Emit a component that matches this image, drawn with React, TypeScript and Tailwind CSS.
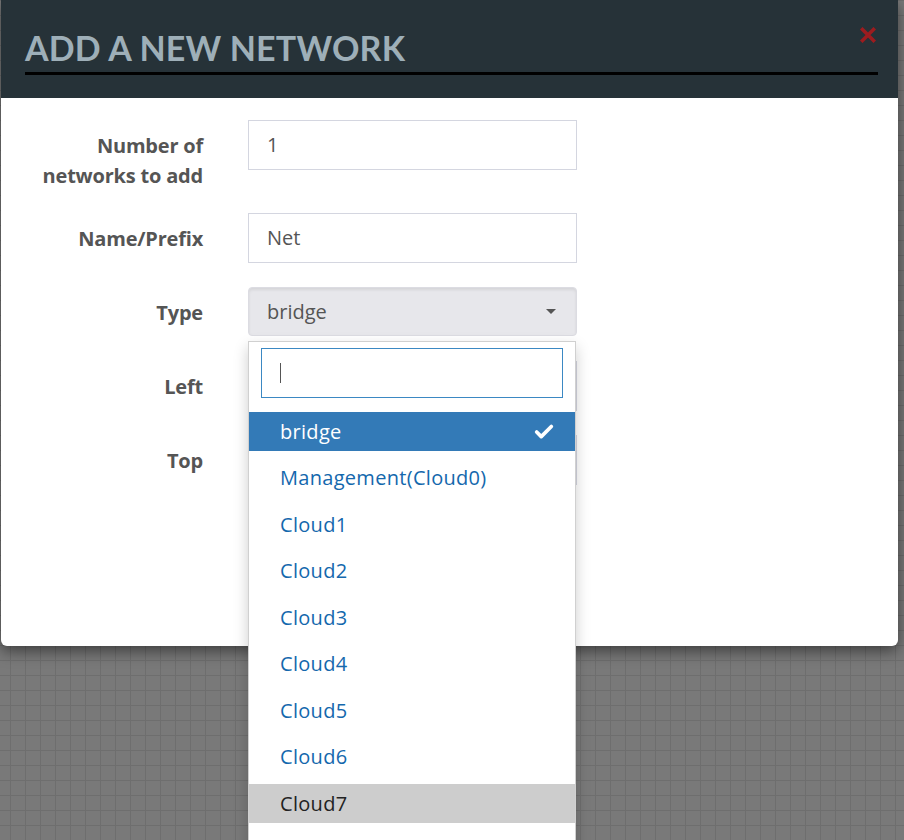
import { Check } from "lucide-react";

const options = [
  "bridge",
  "Management(Cloud0)",
  "Cloud1",
  "Cloud2",
  "Cloud3",
  "Cloud4",
  "Cloud5",
  "Cloud6",
  "Cloud7",
];

function Row({ label, children, className }: { label: React.ReactNode; children?: React.ReactNode; className?: string }) {
  return (
    <div className={"flex items-start " + (className ?? "")}>
      <div className="w-[202px] text-right font-bold text-[#555] text-[20px] leading-[30px] pt-[11px] tracking-[-0.2px]">
        {label}
      </div>
      <div className="ml-[45px]">{children}</div>
    </div>
  );
}

function TextInput({ value }: { value?: string }) {
  return (
    <div className="w-[329px] h-[50px] border border-[#d4d6e0] bg-white px-[18px] flex items-center text-[20px] text-[#555]">
      {value}
    </div>
  );
}

export default function App() {
  return (
    <div className="h-[840px] overflow-hidden bg-[#797979] bg-[linear-gradient(to_right,#6e6e6e_1px,transparent_1px),linear-gradient(to_bottom,#6e6e6e_1px,transparent_1px)] bg-[size:15px_15px] bg-[position:10px_0px] font-['Open_Sans',sans-serif]">
      <div className="relative ml-[1px] w-[897px] bg-white rounded-b-[6px] shadow-[0_5px_15px_rgba(0,0,0,0.5)]">
        {/* Header */}
        <div className="h-[98px] bg-[#263238] px-[24px] pt-[28px] relative">
          <h1 className="font-['Lato',sans-serif] font-bold text-[34px] leading-[40px] text-[#9eafb8] tracking-[0.2px]">
            ADD A NEW NETWORK
          </h1>
          <div className="mt-[4px] w-[853px] h-[3px] bg-black" />
          <svg className="absolute left-[859px] top-[27px]" width="16" height="16" viewBox="0 0 16 16">
            <path d="M2.5 2.5 L13.5 13.5 M13.5 2.5 L2.5 13.5" stroke="#9c1c1f" strokeWidth="3.6" strokeLinecap="square" />
          </svg>
        </div>

        {/* Body */}
        <div className="pt-[22px] h-[548px] relative">
          <Row label={<>Number of<br />networks to add</>} className="h-[93px]">
            <TextInput value="1" />
          </Row>
          <Row label="Name/Prefix" className="h-[74px]">
            <TextInput value="Net" />
          </Row>
          <Row label="Type" className="h-[74px]">
            <div className="relative w-[329px] h-[49px] rounded-[4px] border border-[#dcdce2] bg-[#e7e7eb] shadow-[inset_0_2px_3px_rgba(0,0,0,0.08)] px-[18px] flex items-center text-[20px] text-[#555]">
              bridge
              <span className="absolute right-[20px] top-[21px] w-0 h-0 border-l-[5px] border-r-[5px] border-t-[5px] border-l-transparent border-r-transparent border-t-[#555]" />
            </div>
          </Row>
          <Row label="Left" className="h-[74px]">
            <TextInput />
          </Row>
          <Row label="Top" className="h-[75px]">
            <TextInput />
          </Row>
          <div className="ml-[247px] w-[90px] h-[43px] rounded-[3px] bg-[#0e8a45]" />

          {/* Select dropdown */}
          <div className="absolute left-[247px] top-[243px] w-[328px] h-[520px] bg-white border border-[#d0d0d0] shadow-[0_6px_14px_rgba(0,0,0,0.2)]">
            <div className="px-[12px] pt-[6px] pb-[14px]">
              <div className="h-[50px] border border-[#3b88c3] flex items-center px-[18px]">
                <span className="w-px h-[20px] bg-[#555]" />
              </div>
            </div>
            <div className="flex flex-col gap-[7.5px]">
              {options.map((o, i) => (
                <div
                  key={o}
                  className={
                    "h-[39px] flex items-center justify-between pl-[31px] pr-[20px] text-[20px] tracking-[0.3px] " +
                    (i === 0
                      ? "bg-[#337ab7] text-white"
                      : i === 8
                      ? "bg-[#cdcdcd] text-[#222]"
                      : "text-[#1468ad]")
                  }
                >
                  <span>{o}</span>
                  {i === 0 && <Check size={22} strokeWidth={4} className="text-white" />}
                </div>
              ))}
            </div>
          </div>
        </div>
      </div>
    </div>
  );
}
